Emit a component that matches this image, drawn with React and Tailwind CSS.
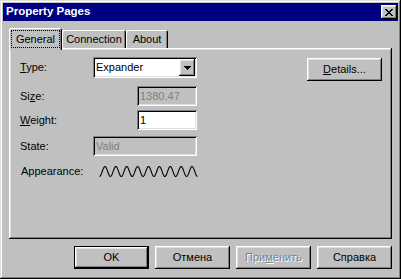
import React from 'react';

const raised =
  'shadow-[inset_-1px_-1px_#000,inset_1px_1px_#fff,inset_-2px_-2px_#808080,inset_2px_2px_#dfdfdf]';
const sunken =
  'shadow-[inset_1px_1px_#808080,inset_-1px_-1px_#fff,inset_2px_2px_#000,inset_-2px_-2px_#dfdfdf]';

function CloseGlyph() {
  // 8x7 pixel X, like the classic caption button
  const rows = ['11000011', '01100110', '00111100', '00011000', '00111100', '01100110', '11000011'];
  return (
    <svg width="8" height="7" viewBox="0 0 8 7" shapeRendering="crispEdges">
      {rows.map((r, y) =>
        r.split('').map((c, x) => (c === '1' ? <rect key={`${x}-${y}`} x={x} y={y} width="1" height="1" fill="#000" /> : null))
      )}
    </svg>
  );
}

function Wave() {
  const w = 99;
  const periods = 9;
  let d = '';
  for (let x = 0; x <= w - 1; x += 0.5) {
    const y = 6.5 + 5 * Math.cos((2 * Math.PI * x * periods) / (w - 1));
    d += (x === 0 ? 'M' : 'L') + (x + 0.5).toFixed(2) + ' ' + y.toFixed(2) + ' ';
  }
  return (
    <svg width={w} height="13" viewBox={`0 0 ${w} 13`}>
      <path d={d} fill="none" stroke="#000" strokeWidth="1.1" />
    </svg>
  );
}

function Button({ children, isDefault, disabled, className = '' }) {
  const inner = (
    <div className={`w-full h-full bg-[#c0c0c0] flex items-center justify-center ${raised} ${disabled ? 'text-[#808080] [text-shadow:1px_1px_0_#fff]' : ''}`}>
      {children}
    </div>
  );
  if (isDefault) {
    return <div className={`border border-black ${className}`}>{inner}</div>;
  }
  return <div className={className}>{inner}</div>;
}

export default function App() {
  return (
    <div className="w-[401px] h-[279px] bg-[#c0c0c0] p-[3px] flex flex-col shadow-[inset_-1px_-1px_#000,inset_1px_1px_#dfdfdf,inset_-2px_-2px_#808080,inset_2px_2px_#fff] font-['Liberation_Sans',Arial,sans-serif] text-[11px] leading-none text-black select-none">
      {/* title bar */}
      <div className="h-[18px] bg-[#000080] flex items-center justify-between pl-[3px] pr-[1px]">
        <span className="text-white font-bold text-[11.5px]">Property Pages</span>
        <div className={`w-[16px] h-[14px] bg-[#c0c0c0] flex items-center justify-center ${raised}`}>
          <CloseGlyph />
        </div>
      </div>

      <div className="flex flex-col px-[6px] pt-[7px]">
        {/* tabs */}
        <div className="h-[20px] flex items-end">
          <div className="relative z-10 w-[53px] h-[22px] mb-[-2px] bg-[#c0c0c0] rounded-t-[2px] shadow-[inset_1px_1px_#fff,inset_-1px_0_#000,inset_-2px_0_#808080] pt-[2px] px-[2px]">
            <div className="h-[18px] border border-dotted border-black flex items-center justify-center">General</div>
          </div>
          <div className="w-[64px] h-[18px] bg-[#c0c0c0] rounded-t-[2px] shadow-[inset_1px_1px_#fff,inset_-1px_0_#000,inset_-2px_0_#808080] flex items-center justify-center pt-[1px]">
            Connection
          </div>
          <div className="w-[42px] h-[18px] bg-[#c0c0c0] rounded-t-[2px] shadow-[inset_1px_1px_#fff,inset_-1px_0_#000,inset_-2px_0_#808080] flex items-center justify-center pt-[1px]">
            About
          </div>
        </div>

        {/* panel */}
        <div className={`h-[191px] bg-[#c0c0c0] ${raised} flex flex-col pt-[9px] pl-[11px] pr-[10px]`}>
          <div className="flex items-start">
            <div className="w-[73px] h-[21px] flex items-center">
              <span><u>T</u>ype:</span>
            </div>
            <div className={`w-[104px] h-[21px] bg-white ${sunken} flex items-center`}>
              <span className="flex-1 pl-[3px]">Expander</span>
              <div className={`w-[16px] h-[17px] m-[2px] bg-[#c0c0c0] ${raised} flex items-center justify-center`}>
                <svg width="7" height="4" viewBox="0 0 7 4" shapeRendering="crispEdges">
                  <path d="M0 0h7v1h-1v1h-1v1h-1v1h-1v-1h-1v-1h-1v-1h-1z" fill="#000" />
                </svg>
              </div>
            </div>
            <Button className="ml-auto mt-[1px] w-[75px] h-[23px]">
              <span><u>D</u>etails...</span>
            </Button>
          </div>

          <div className="flex items-center mt-[5px]">
            <div className="w-[73px] h-[20px] flex items-center">
              <span>Si<u>z</u>e:</span>
            </div>
            <div className={`ml-[44px] w-[60px] h-[20px] bg-[#c0c0c0] ${sunken} flex items-center pl-[3px] text-[#808080]`}>
              1380.47
            </div>
          </div>

          <div className="flex items-center mt-[4px]">
            <div className="w-[73px] h-[20px] flex items-center">
              <span><u>W</u>eight:</span>
            </div>
            <div className={`ml-[44px] w-[60px] h-[20px] bg-white ${sunken} flex items-center pl-[3px]`}>
              1
            </div>
          </div>

          <div className="flex items-center mt-[6px]">
            <div className="w-[73px] h-[20px] flex items-center">
              <span>State:</span>
            </div>
            <div className={`w-[104px] h-[20px] bg-[#c0c0c0] ${sunken} flex items-center pl-[3px] text-[#808080]`}>
              Valid
            </div>
          </div>

          <div className="flex items-center mt-[9px] pl-[1px]">
            <div className="w-[78px] h-[13px] flex items-center">
              <span>Appearance:</span>
            </div>
            <Wave />
          </div>
        </div>

        {/* buttons */}
        <div className="mt-[7px] h-[23px] flex justify-end gap-[6px]">
          <Button isDefault className="w-[75px] h-[23px]">OK</Button>
          <Button className="w-[75px] h-[23px]">Отмена</Button>
          <Button disabled className="w-[75px] h-[23px]">
            <span>При<u>м</u>енить</span>
          </Button>
          <Button className="w-[75px] h-[23px]">Справка</Button>
        </div>
      </div>
    </div>
  );
}
